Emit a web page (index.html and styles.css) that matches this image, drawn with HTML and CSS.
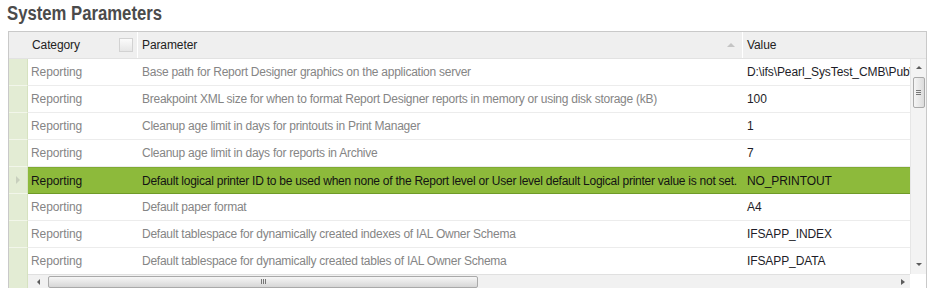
FILE: index.html
```html
<!DOCTYPE html>
<html lang="en">
<head>
    <meta charset="UTF-8">
    <title>System Parameters</title>
    <link rel="stylesheet" href="styles.css">
</head>
<body>

    <!-- Page Title -->
    <div class="page-title">
        <h1>System Parameters</h1>
    </div>

    <!-- Parameters Grid -->
    <div class="grid">
        <div class="grid-header">
            <div class="row-head"></div>
            <div class="col col-category">
                <span>Category</span>
                <span class="filter-box"></span>
            </div>
            <div class="col col-parameter">
                <span>Parameter</span>
                <span class="sort-arrow"></span>
            </div>
            <div class="col col-value"><span>Value</span></div>
            <div class="col col-scroll"></div>
        </div>

        <div class="grid-body">
            <div class="rows" id="rows">
                <!-- rows are filled by the script below -->
            </div>

            <!-- Vertical Scrollbar -->
            <div class="vscroll">
                <span class="arrow arrow-up"></span>
                <span class="vthumb"><span class="grip-h"></span></span>
                <span class="vtrack"></span>
                <span class="arrow arrow-down"></span>
            </div>
        </div>

        <!-- Horizontal Scrollbar -->
        <div class="grid-footer">
            <div class="row-head"></div>
            <div class="hscroll">
                <span class="arrow arrow-left"></span>
                <span class="hthumb"><span class="grip-v"></span></span>
                <span class="htrack"></span>
                <span class="arrow arrow-right"></span>
            </div>
            <div class="corner"></div>
        </div>
    </div>

    <script>
        // Parameter data as shown in the grid
        const parameters = [
            { category: 'Reporting', parameter: 'Base path for Report Designer graphics on the application server', value: 'D:\\ifs\\Pearl_SysTest_CMB\\Pub\\IFS\\graphics' },
            { category: 'Reporting', parameter: 'Breakpoint XML size for when to format Report Designer reports in memory or using disk storage (kB)', value: '100' },
            { category: 'Reporting', parameter: 'Cleanup age limit in days for printouts in Print Manager', value: '1' },
            { category: 'Reporting', parameter: 'Cleanup age limit in days for reports in Archive', value: '7' },
            { category: 'Reporting', parameter: 'Default logical printer ID to be used when none of the Report level or User level default Logical printer value is not set.', value: 'NO_PRINTOUT', selected: true },
            { category: 'Reporting', parameter: 'Default paper format', value: 'A4' },
            { category: 'Reporting', parameter: 'Default tablespace for dynamically created indexes of IAL Owner Schema', value: 'IFSAPP_INDEX' },
            { category: 'Reporting', parameter: 'Default tablespace for dynamically created tables of IAL Owner Schema', value: 'IFSAPP_DATA' }
        ];

        function populateGrid(data) {
            const rows = document.getElementById('rows');
            rows.innerHTML = '';

            data.forEach((item) => {
                const row = document.createElement('div');
                row.className = item.selected ? 'row selected' : 'row';

                const head = document.createElement('div');
                head.className = 'row-head';
                if (item.selected) {
                    const marker = document.createElement('span');
                    marker.className = 'row-marker';
                    head.appendChild(marker);
                }
                row.appendChild(head);

                const cellCategory = document.createElement('div');
                cellCategory.className = 'cell cell-category';
                cellCategory.textContent = item.category;
                row.appendChild(cellCategory);

                const cellParameter = document.createElement('div');
                cellParameter.className = 'cell cell-parameter';
                cellParameter.textContent = item.parameter;
                row.appendChild(cellParameter);

                const cellValue = document.createElement('div');
                cellValue.className = 'cell cell-value';
                cellValue.textContent = item.value;
                row.appendChild(cellValue);

                rows.appendChild(row);
            });
        }

        populateGrid(parameters);
    </script>

</body>
</html>
```

FILE: styles.css
```css
/* Base Styles */
body {
    margin: 0;
    font-family: "Liberation Sans", Arial, sans-serif;
    font-size: 12px;
    color: #333;
    background: #fff;
    overflow: hidden;
}

/* Title */
.page-title {
    height: 31px;
    padding-left: 7px;
}

.page-title h1 {
    display: inline-block;
    margin: 0;
    padding-top: 2px;
    font-size: 20px;
    font-weight: bold;
    color: #4b4b4b;
    transform: scaleX(0.835);
    transform-origin: left top;
}

/* Grid frame */
.grid {
    margin-left: 8px;
    width: 917px;
    border: 1px solid #c9c9c9;
    border-bottom: none;
}

.row-head {
    width: 19px;
    flex: none;
    background: #e3ecd4;
    border-right: 1px solid #d6e2c0;
    box-sizing: border-box;
}

/* Header */
.grid-header {
    display: flex;
    height: 26px;
    background: #efefef;
    border-bottom: 1px solid #e2e2e2;
}

.grid-header .row-head {
    background: #efefef;
    border-right: none;
}

.col {
    display: flex;
    align-items: center;
    box-sizing: border-box;
    color: #222;
    letter-spacing: -0.1px;
}

.col-category {
    width: 110px;
    padding-left: 4px;
    justify-content: space-between;
    border-right: 1px solid #fff;
}

.col-parameter {
    width: 605px;
    padding-left: 4px;
    justify-content: space-between;
    border-right: 1px solid #fff;
}

.col-value {
    width: 167px;
    padding-left: 4px;
}

.col-scroll {
    width: 16px;
}

.filter-box {
    width: 12px;
    height: 12px;
    margin-right: 4px;
    border: 1px solid #d2d2d2;
    background: linear-gradient(#fbfbfb, #e6e6e6);
}

.sort-arrow {
    width: 0;
    height: 0;
    margin-right: 7px;
    border-left: 4px solid transparent;
    border-right: 4px solid transparent;
    border-bottom: 4px solid #c4c4c4;
}

/* Body */
.grid-body {
    display: flex;
    height: 215px;
}

.rows {
    width: 901px;
    overflow: hidden;
}

.row {
    display: flex;
    height: 27px;
}

.cell {
    display: flex;
    align-items: center;
    height: 27px;
    box-sizing: border-box;
    padding-left: 3px;
    border-bottom: 1px solid #ececec;
    white-space: nowrap;
    overflow: hidden;
    color: #858585;
    letter-spacing: -0.25px;
}

.row .row-head {
    border-bottom: 1px solid #f2f6ea;
}

.cell-category {
    width: 110px;
    letter-spacing: -0.1px;
}

.cell-parameter {
    width: 605px;
    padding-left: 4px;
}

.cell-value {
    width: 167px;
    padding-left: 4px;
    color: #1d1d28;
    letter-spacing: -0.1px;
}

/* Selected row */
.row.selected .cell {
    background: #8dba3b;
    color: #131313;
    border-top: 1px solid #80ab32;
    border-bottom: 1px solid #6f9a28;
}

.row-marker {
    display: block;
    width: 0;
    height: 0;
    margin: 9px 0 0 7px;
    border-top: 4px solid transparent;
    border-bottom: 4px solid transparent;
    border-left: 4px solid #c8cfbd;
}

/* Vertical scrollbar */
.vscroll {
    width: 16px;
    display: flex;
    flex-direction: column;
    align-items: center;
    background: #f3f3f3;
    border-left: 1px solid #e6e6e6;
    box-sizing: border-box;
}

.arrow {
    flex: none;
    width: 0;
    height: 0;
}

.arrow-up {
    margin-top: 7px;
    border-left: 3px solid transparent;
    border-right: 3px solid transparent;
    border-bottom: 3px solid #5c5c5c;
}

.arrow-down {
    margin-bottom: 8px;
    border-left: 3px solid transparent;
    border-right: 3px solid transparent;
    border-top: 3px solid #5c5c5c;
}

.vthumb {
    display: flex;
    align-items: center;
    justify-content: center;
    width: 12px;
    height: 31px;
    margin-top: 8px;
    border: 1px solid #a9a9a9;
    border-radius: 2px;
    background: linear-gradient(to right, #f5f5f5, #dcdcdc);
    box-sizing: border-box;
}

.grip-h {
    width: 5px;
    height: 5px;
    border-top: 1px solid #777;
    border-bottom: 1px solid #777;
    background: linear-gradient(#777, #777) center / 100% 1px no-repeat;
    box-sizing: border-box;
}

.vtrack {
    flex: 1;
}

/* Horizontal scrollbar */
.grid-footer {
    display: flex;
    height: 14px;
}

.hscroll {
    width: 882px;
    display: flex;
    align-items: center;
    background: #f1f1f1;
    border-top: 1px solid #e0e0e0;
    box-sizing: border-box;
}

.arrow-left {
    margin-left: 9px;
    border-top: 3px solid transparent;
    border-bottom: 3px solid transparent;
    border-right: 3px solid #5c5c5c;
}

.arrow-right {
    margin-right: 5px;
    border-top: 3px solid transparent;
    border-bottom: 3px solid transparent;
    border-left: 4px solid #5c5c5c;
}

.hthumb {
    display: flex;
    align-items: center;
    justify-content: center;
    width: 430px;
    height: 12px;
    margin-left: 8px;
    border: 1px solid #a9a9a9;
    border-radius: 2px;
    background: linear-gradient(#f6f6f6, #d6d6d6);
    box-sizing: border-box;
}

.grip-v {
    width: 5px;
    height: 5px;
    border-left: 1px solid #777;
    border-right: 1px solid #777;
    background: linear-gradient(#777, #777) center / 1px 100% no-repeat;
    box-sizing: border-box;
}

.htrack {
    flex: 1;
}

.corner {
    width: 16px;
    background: #fff;
}
```
